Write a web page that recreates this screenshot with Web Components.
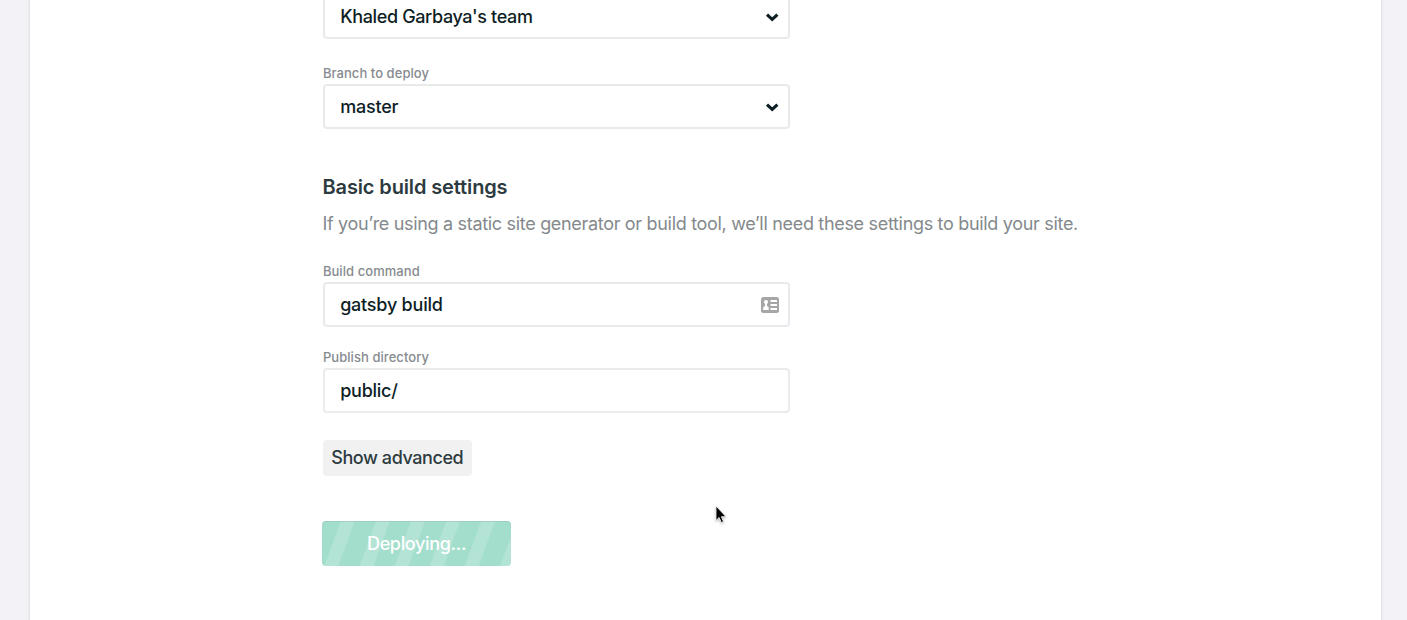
<!DOCTYPE html>
<html lang="en">
<head>
<meta charset="utf-8">
<title>Create a new site</title>
<style>
html, body { margin: 0; height: 100%; overflow: hidden; background: #f2f2f7; }
body { font-family: Inter, "Liberation Sans", sans-serif; color: #0e1e25; }
</style>
</head>
<body>
<site-page>
  <form-field style="--ls:-.36px"><span>Khaled Garbaya's team</span><chevron-icon slot="icon"></chevron-icon></form-field>
  <form-field label="Branch to deploy" style="--gap:26px;--ls:-.2px"><span>master</span><chevron-icon slot="icon"></chevron-icon></form-field>
  <section-intro><span slot="title">Basic build settings</span><span>If you’re using a static site generator or build tool, we’ll need these settings to build your site.</span></section-intro>
  <form-field label="Build command" style="--gap:25px;--ls:-.22px;--line:#ebe9ed"><span>gatsby build</span><card-icon slot="icon"></card-icon></form-field>
  <form-field label="Publish directory" style="--gap:22px;--ls:-.25px;--line:#ebebed"><span>public/</span></form-field>
  <plain-button><span>Show advanced</span></plain-button>
  <deploy-button><span>Deploying...</span></deploy-button>
</site-page>
<mouse-pointer></mouse-pointer>
<script>
const define = (name, html) => customElements.define(name, class extends HTMLElement {
  constructor() {
    super();
    this.attachShadow({ mode: 'open' }).innerHTML = html;
  }
  connectedCallback() {
    const label = this.shadowRoot.querySelector('[data-label]');
    if (label) label.textContent = this.getAttribute('label') || '';
  }
});

define('site-page', `<style>
:host { display: block; box-sizing: border-box; width: 1350.5px; height: 620px; margin-left: 30px; padding-left: 292.5px; background: #fff; box-shadow: 0 0 2px 1px rgba(14,30,37,.09); overflow: hidden; }
main { display: flex; flex-direction: column; align-items: flex-start; margin-top: -25px; }
</style><main><slot></slot></main>`);

define('form-field', `<style>
:host { display: block; width: 467.5px; margin-top: var(--gap, 0); }
.label { height: 19px; line-height: 17px; font-size: 13px; font-weight: 500; letter-spacing: .06px; color: #868b8f; white-space: nowrap; padding-left: .4px; }
.box { box-sizing: border-box; height: 45px; border: 2px solid var(--line, #e9ebeb); border-radius: 4px; display: flex; align-items: center; justify-content: space-between; padding: 0 9px 0 15.7px; font-size: 18px; font-weight: 540; line-height: 24px; letter-spacing: var(--ls, 0); background: #fff; }
</style><div class="label" data-label></div><div class="box"><slot></slot><slot name="icon"></slot></div>`);

define('chevron-icon', `<style>:host{display:block;width:14px;height:10px}svg{display:block}</style>
<svg width="14" height="10" viewBox="0 0 14 10"><path d="M2 2.700 7.200 7.500 12.400 2.700" fill="none" stroke="#0e1e25" stroke-width="3.100"/></svg>`);

define('card-icon', `<style>:host{display:block;width:18px;height:16px}svg{display:block}</style>
<svg width="18" height="16" viewBox="0 0 18 16"><rect width="18" height="16" rx="2.500" fill="#a6a6a6"/><circle cx="5" cy="5" r="2.100" fill="#fff"/><path d="M4 6h2v3l1.700 1.200V13H2.200v-2.800L4 9zM9.500 3H16v2H9.500zM9.500 7H16v2H9.500zM9.500 11H16v2H9.500z" fill="#fff"/></svg>`);

define('section-intro', `<style>
:host { display: block; margin-top: 44px; white-space: nowrap; }
h2 { margin: 0; font-size: 20px; line-height: 29px; font-weight: 600; letter-spacing: -.13px; color: #2d3b41; }
p { margin: 9px 0 0; font-size: 18px; line-height: 26px; padding-bottom: 1px; letter-spacing: -.315px; color: #84898c; }
</style><h2><slot name="title"></slot></h2><p><slot></slot></p>`);

define('plain-button', `<style>
:host { display: block; margin-top: 27px; letter-spacing: -.42px; }
button { display: block; font: 520 18px/24px Inter, sans-serif; color: #2d3b41; background: #f1f1f1; border: 0; border-radius: 4px; width: 149.500px; height: 36px; padding: 0; white-space: nowrap; letter-spacing: inherit; }
</style><button type="button"><slot></slot></button>`);

define('deploy-button', `<style>
:host { display: block; margin-top: 45px; margin-left: -.5px; letter-spacing: -.33px; }
button { display: block; font: 520 18px/24px Inter, sans-serif; color: #fff; border: 0; border-radius: 4px; width: 189px; height: 45px; padding: 0; white-space: nowrap; letter-spacing: inherit; box-shadow: inset 0 1px 0 rgba(120,160,150,.25);
 background: repeating-linear-gradient(110deg, transparent 0 17px, rgba(255,255,255,.17) 18.5px 30px, transparent 31.500px 33px), #a3decd; }
</style><button type="button"><slot></slot></button>`);

define('mouse-pointer', `<style>:host{position:absolute;left:713.5px;top:504px;width:16px;height:22px}svg{display:block;filter:drop-shadow(0 1px 1px rgba(0,0,0,.3))}</style>
<svg width="16" height="22" viewBox="0 0 16 22"><path d="M2 2v14.500l3.100-3 2.200 5 2.200-.9-2.100-4.900H12z" fill="#000" stroke="#fff" stroke-width=".8"/></svg>`);
</script>
</body>
</html>
